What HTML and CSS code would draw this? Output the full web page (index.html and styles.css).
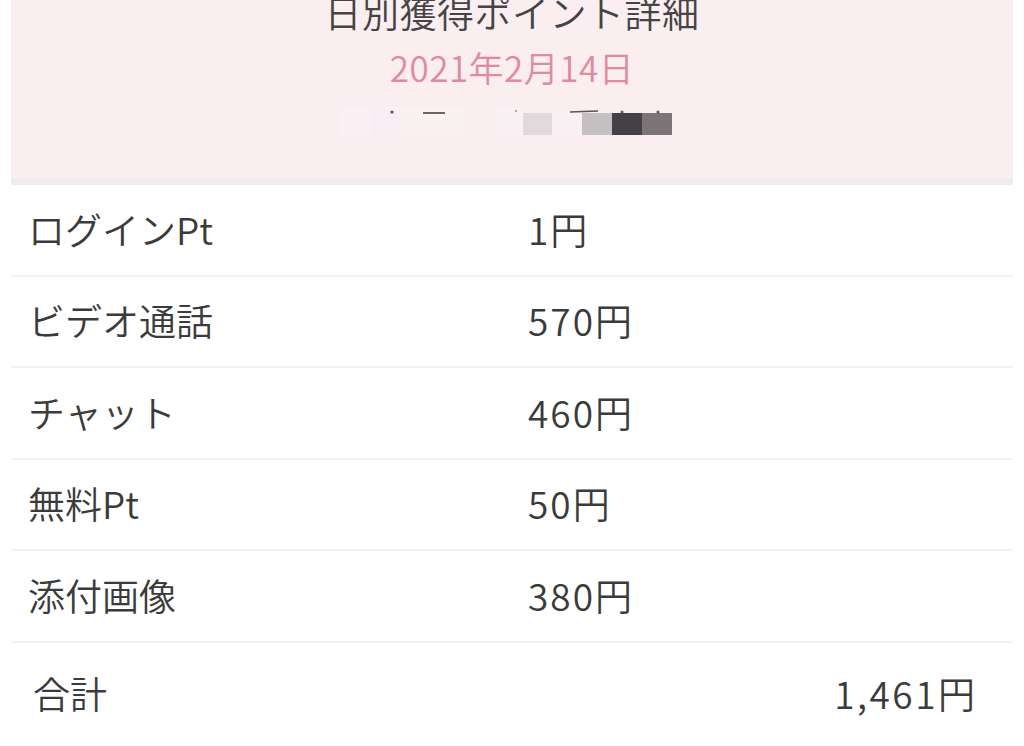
FILE: index.html
```html
<!DOCTYPE html>
<html lang="ja">
<head>
<meta charset="utf-8">
<title>日別獲得ポイント詳細</title>
<link rel="stylesheet" href="styles.css">
</head>
<body>
<div class="page">
  <header class="head">
    <h1 class="title">日別獲得ポイント詳細</h1>
    <p class="date">2021年2月14日</p>
    <div class="name" aria-label="ユーザー名（モザイク）">
      <svg width="332" height="28" viewBox="0 0 332 28">
        <rect x="0" y="2" width="30" height="26" fill="#fbf1f4"/>
        <rect x="30" y="2" width="30" height="26" fill="#f8eef4"/>
        <rect x="60" y="2" width="65" height="26" fill="#faf1f3"/>
        <rect x="155" y="2" width="28" height="26" fill="#f9f1f3"/>
        <rect x="183" y="6" width="29" height="22" fill="#e1d9dc"/>
        <rect x="212" y="6" width="30" height="22" fill="#f9f0f3"/>
        <rect x="242" y="6" width="30" height="22" fill="#c4c0c2"/>
        <rect x="272" y="6" width="30" height="22" fill="#444046"/>
        <rect x="302" y="6" width="30" height="22" fill="#7c7476"/>
        <circle cx="52" cy="5" r="1.6" fill="#555"/>
        <rect x="83" y="5" width="22" height="2" fill="#666"/>
        <circle cx="176" cy="4" r="0.9" fill="#888"/>
        <path d="M230 5 L258 4" stroke="#555" stroke-width="1.6"/>
        <circle cx="282" cy="5" r="1.5" fill="#555"/>
        <circle cx="318" cy="5" r="1.5" fill="#555"/>
      </svg>
    </div>
  </header>
  <div class="band"></div>
  <ul class="list">
    <li class="row"><span class="label">ログインPt</span><span class="value">1円</span></li>
    <li class="row"><span class="label">ビデオ通話</span><span class="value">570円</span></li>
    <li class="row"><span class="label">チャット</span><span class="value">460円</span></li>
    <li class="row"><span class="label">無料Pt</span><span class="value">50円</span></li>
    <li class="row"><span class="label">添付画像</span><span class="value">380円</span></li>
  </ul>
  <div class="total">
    <span class="total-label">合計</span>
    <span class="total-value">1,461円</span>
  </div>
</div>
</body>
</html>
```

FILE: styles.css
```css
html, body {
  margin: 0;
  padding: 0;
  background: #ffffff;
}
body {
  font-family: "Noto Sans CJK JP", "Noto Sans", sans-serif;
  color: #3b3b3b;
  overflow: hidden;
}
.page {
  margin: 0 11px;
  height: 746px;
}
.head {
  background: #fbeef1;
  height: 178px;
  display: flex;
  flex-direction: column;
  align-items: center;
}
.title {
  margin: -7px 0 0;
  font-size: 37px;
  line-height: 38px;
  font-weight: 350;
  color: #444444;
  letter-spacing: 0.5px;
}
.date {
  margin: 18px 0 0;
  font-size: 35px;
  line-height: 36px;
  font-weight: 350;
  color: #e08aa0;
  letter-spacing: 0.5px;
}
.name {
  margin-top: 22px;
  margin-left: -12px;
  height: 28px;
  display: flex;
}
.band {
  height: 7px;
  background: #eeecec;
}
.list {
  list-style: none;
  margin: 0;
  padding: 0;
}
.row {
  height: 87.5px;
  border-bottom: 2px solid #f1f1f1;
  display: flex;
  align-items: center;
  font-size: 37px;
  font-weight: 350;
  padding-left: 17px;
  padding-bottom: 2px;
}
.label {
  width: 500px;
}
.value {
  letter-spacing: 2px;
}
.total {
  height: 100px;
  display: flex;
  align-items: center;
  justify-content: space-between;
  padding: 0 38px 4px 22px;
  font-size: 37px;
  font-weight: 350;
}
.total-value {
  letter-spacing: 2.5px;
  margin-right: -2.5px;
}
```
